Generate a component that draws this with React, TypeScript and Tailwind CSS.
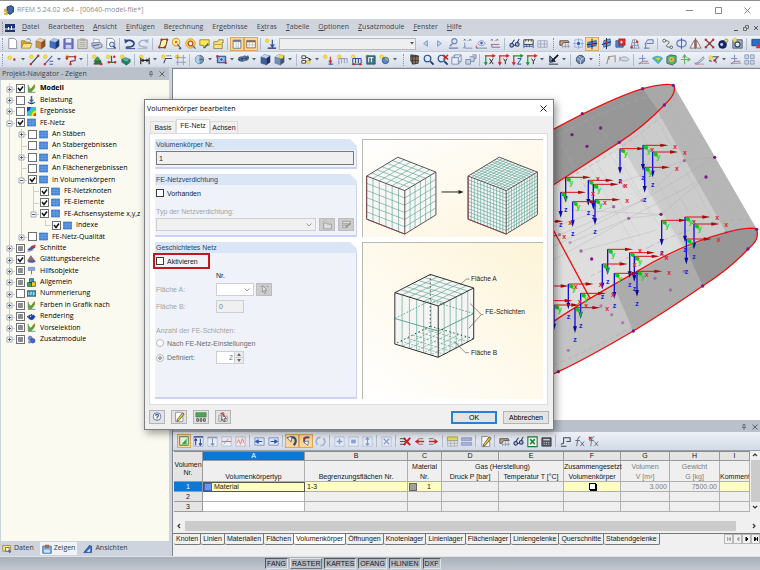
import React from "react";

type Shape = [string, string?, string?, number?];

const c = (x: number, y: number, r: number) =>
  `M${x - r} ${y}a${r} ${r} 0 1 0 ${2 * r} 0a${r} ${r} 0 1 0 ${-2 * r} 0`;

const spark = (x = 3.5, y = 4): Shape => [c(x, y, 2), "#f6e23c", "#d8b93a", 0.6];
const red = (x: number, y: number): Shape => [c(x, y, 1.3), "#dd2222"];
const page: Shape = ["M3 1.5h6l2.500 2.500v8.500h-8.500z", "#fff", "#7a8290", 0.9];
const lens: Shape[] = [
  [c(6, 6, 3.6), "#dceaf8", "#2c4f8c", 1.3],
  ["M9 9l3.500 3.500", "none", "#223e70", 2],
];
const cube = (a: string, b: string, d: string): Shape[] => [
  ["M2 4.500l4-3l6 1.500l-4 3z", a, "#4a5a7a", 0.4],
  ["M2 4.500l6 1.500v7l-6-2z", b, "#4a5a7a", 0.4],
  ["M8 6l4-3v7l-4 3z", d, "#4a5a7a", 0.4],
];
const axisIcon = (a: string, b: string): Shape[] => [
  ["M2 3h10M10 1.500l2.500 1.500l-2.500 1.500", "none", a, 1.3],
  ["M3 3v9M1.500 10l1.500 2.500l1.500-2.500", "none", b, 1.3],
];
const support: Shape[] = [
  ["M3 7c2-4 6-4 8 0c-2 3-6 3-8 0", "#dbe5f5", "#6d86bd", 0.8],
  [c(7, 6.500, 1.5), "#4d6fb8"],
  ["M1 12h12", "none", "#7d8aa8", 1],
];
const gridDim: Shape[] = [
  ["M2 11h10M2 11v-7h10v7M5 4v7M9 4v7M2 7.500h10", "none", "#8f9ab5", 0.8],
];

const ICONS: Record<string, Shape[]> = {
  neu: [page],
  oeffnen: [
    ["M1.500 4h4l1 1.500h5v6h-10z", "#d9a520", "#8a6a14", 0.6],
    ["M3.500 7h9.500l-2 5h-9.500z", "#ffe08a", "#8a6a14", 0.6],
    ["M7 3c2-2 4-1 4.500 1", "none", "#3d67ad", 1],
  ],
  block: cube("#f2d28a", "#d4923c", "#8a4f1c"),
  blockblau: cube("#a9c9f2", "#3c6fc4", "#1c3877"),
  speichern: [
    ["M2 2h10v10.500h-10z", "#6f78c4", "#3a4080", 0.7],
    ["M4 2h6v4h-6z", "#e9ecfa"],
    ["M4 8.500h6v4h-6z", "#c9cde8"],
  ],
  ablage: [
    ["M2 3h10v9.500h-10z", "#d6d3cc", "#8b857c", 0.8],
    ["M4.500 1.500h5v2.500h-5z", "#a7a7a7"],
    ["M4 6h6M4 8h6M4 10h6", "none", "#a09a90", 0.7],
  ],
  drucken: [
    ["M4 2l6 1v4h-6z", "#fff", "#7786a8", 0.6],
    ["M2 6.500l8-1l3 2.500v3l-7 2l-4-3z", "#bcc5d6", "#57637d", 0.7],
    ["M3 9.500l7-1.500", "none", "#3f5b98", 1],
  ],
  vorschau: [page, [c(8.500, 8, 2.6), "#cfe2f7", "#3d5f9c", 1], ["M10 10l2.500 2.500", "none", "#2b4677", 1.5]],
  undo: [["M2 4c3-1 9-1 10 3c0 3-4 4-9 4", "none", "#2c4687", 1.7], ["M1.500 2l.5 5l4-2.500z", "#2c4687"], ["M3 12.500h10", "none", "#2c4687", 1]],
  redo: [["M12 4c-3-1-9-1-10 3c0 3 4 4 9 4", "none", "#a5b2cc", 1.6], ["M12.500 2l-.5 5l-4-2.500z", "#a5b2cc"], ["M1 12.500h10", "none", "#a5b2cc", 1]],
  flaeche: [["M3.500 11.500l2.500-9h6.500l-2.500 9z", "#fff7a0", "#2f2f2f", 1], red(3.500, 11), red(12, 3), red(6, 3), red(9.500, 11)],
  lasso: [[c(6.500, 5.500, 4), "#fdf1a5", "#e0a43a", 1.2], [c(6.500, 5.500, 1.4), "#e86a2a"], ["M8 8l4 4.500M12 12.500h-2.500", "none", "#4a5775", 1.3]],
  zielring: [[c(7, 7, 5), "#f9e64a", "#c9a020", 1], [c(7, 7, 2.5), "#fff", "#c44a33", 1.5], ["M9 9l3.500 3.500", "none", "#5a6174", 1.3]],
  hinweis: [["M2 3h10v6h-4l-2 3v-3h-4z", "#fbe94f", "#7a7430", 0.8], ["M7 12l4-5", "none", "#3e5dac", 1.4]],
  ordner: [["M2 5h4l1-2h5v3h-1v6.500h-9z", "#fbe377", "#77713a", 0.8], ["M3 8h7", "none", "#a18b2a", 0.8]],
  navigator: [["M2.500 2.500h9v9.500h-9z", "#fff", "#66707f", 1], ["M2.500 3.500h9", "none", "#66707f", 2], ["M6 4v8M8.500 4v8", "none", "#98a2b3", 0.8]],
  tabelle: [["M2 3h10v8.500h-10z", "#fff", "#7b6a5a", 1], ["M2 4h10", "none", "#7b6a5a", 2], ["M2 8h10M5 4v8M8.500 4v8", "none", "#b5a89a", 0.7]],
  lastfall: [spark(), ["M9 3v7M7 8l2 3l2-3", "none", "#30549e", 1.3], ["M4 12h9", "none", "#26344f", 1.4]],
  links: [["M9 4l-4 3l4 3z", "#c4d5f4", "#6482c2", 0.8]],
  rechts: [["M5 4l4 3l-4 3z", "#c4d5f4", "#6482c2", 0.8]],
  lupe: [[c(8, 4.500, 2.800), "#dbe5f5", "#6d81b0", 1.2], ["M6 7l-3 3M2 12h10", "none", "#6d81b0", 1.3]],
  augex: [...support, ["M2 9l-1 2l2 1", "none", "#cc5555", 1]],
  xwert: [["M3 2l2 2M5 2l-2 2M7 4h1M9 2l2 2M11 2l-2 2", "none", "#555f75", 0.8], ["M4 6v6h8M2 12l3-2", "none", "#8390b4", 1]],
  xachse: [["M2 2l2 2M4 2l-2 2M6 4h1M8 2l2 2M10 2l-2 2", "none", "#555f75", 0.8], ["M2 8h9", "none", "#cc5555", 1], ["M3 8v3h9", "none", "#5d74b8", 1]],
  brille: [[c(4, 9, 2), "#9fb8e8", "#26355c", 1.1], [c(10, 8, 2), "#9fb8e8", "#26355c", 1.1], ["M4 7l3-4M10 6l2-4M6 9h2", "none", "#26355c", 1.1]],
  messen: [["M2 3h10v5h-10z", "#f0f0e8", "#333", 1], ["M2 8v4M5 8v3M8 8v3M12 8v4M2 10h10", "none", "#3560b8", 1], ["M4 3v2M7 3v2M10 3v2", "none", "#333", 0.8]],
  messengrau: gridDim,
  hand: [["M2 4h9l1 2h-6l-2 3h-2z", "#c7a183", "#3c3834", 0.8], ["M5 9v3M8 7v5M11 7v5M4 10h9", "none", "#8b8f99", 0.8]],
  raster: [["M7 1v12M1 7h12M3 3h8v8h-8z", "none", "#8aa2d8", 0.8], [c(7, 7, 1.8), "#2e5fc2"]],
  ebene: [["M2 5l10-2v6l-10 2z", "#4e8bdd", "#1c3b77", 0.7], ["M7 1v12M1 8l12-2", "none", "#1c2d55", 1.2], red(7, 7)],
  ebene2: [["M4 4l7-2v7l-7 2z", "#6fa0e4", "#1c3b77", 0.7], ["M7 1v12M2 8l10-3", "none", "#1c2d55", 1.1], red(7, 6)],
  ebene3: [["M2 4h8v7h-8z", "#4e8bdd", "#1c3b77", 0.7], ["M5 2h7v7h-7z", "#cc3030", "#822", 0.6], ["M8 4v3M6.500 5.500h3", "none", "#fff", 0.9]],
  gitter: [["M3 12l2-9h4l3 9zM4 9h7M4.500 6h6M7 3v9", "none", "#7e8aa6", 0.9], red(4, 11), red(10, 5)],
  beschriftung: [["M3 8l3-5h6v4h-7", "#dae3f4", "#5f71a0", 1], ["M2 12h6M4 12v-5", "none", "#5f71a0", 1]],
  verbinden: [[c(3.500, 4, 1.6), "#fff", "#444", 0.9], [c(11, 11, 1.4), "#fff", "#444", 0.9], ["M5 4c4 0 5 2 2 4s0 3 2.500 3", "none", "#555", 1]],
  ellipse: [["M2 7c0-5 10-5 10 0s-10 5-10 0", "none", "#6a82c9", 1.4], ["M7 1v12", "none", "#c33", 1]],
  spiegeln: [["M6 3v9h-5zM8 3v9h5z", "#f0f0f0", "#8a6060", 0.9], ["M7 1v12", "none", "#b33", 0.9]],
  kreuz: [["M3 3l8 8M11 3l-8 8", "none", "#555", 1.4], red(3, 3), red(11, 3), red(3, 11), red(11, 11), red(7, 7)],
  kugel: [[c(6, 8, 4.2), "#182a6a", "#0c1440", 0.8], [c(5, 8, 1.6), "#cfd8ff"], [c(10, 4, 1.8), "#f0e66a", "#555", 0.6]],
  kamera: [["M2 3h10v9h-10z", "#aab4c8", "#3c4966", 0.9], [c(7, 8, 2.8), "#dfe9fb", "#26344f", 1.2], spark(4, 3)],
  monitor: [["M2 2.500h11v7h-11z", "#2c6fc4", "#173a70", 0.8], ["M6 12l3-5l3 5z", "#dd3333"]],
  punkt: [spark(4, 5), red(9, 7)],
  stab: [spark(), ["M3 12l8-9", "none", "#3a3a3a", 1.2], red(3, 12), red(11, 3)],
  stab2: [spark(), ["M3 12l8-9M8 9h4M8 12h4", "none", "#4b5ea0", 1.1], red(3, 12)],
  linie: [spark(), ["M3 6v-2h9v4l-5 1v4", "none", "#8a3030", 1.2], red(3, 6), red(12, 4), red(7, 12)],
  auflager: [spark(), ["M7 4l4 5h-8z", "#3f9a4f", "#1b5a29", 0.6], ["M3 12h9l-2-3h-5z", "#2e7d3c", "#133f1b", 0.6], red(11, 12)],
  gelenk: [spark(), ["M4 10h7M7 3v7", "none", "#2c6e38", 1.3], red(4, 10), red(11, 10), red(10, 4)],
  volumen: [spark(), ["M3 7l4-2l5 2l-4 3z", "#58b8a4", "#1e5a7a", 0.7], ["M3 7v3l5 3v-3zM8 10v3l4-3v-3z", "#2b8b5c", "#1e5a4a", 0.6]],
  mass: [spark(), ["M3 5v7M12 5v7M3 8h9", "none", "#222", 1.2], ["M6 6l-3 2l3 2zM9 6l3 2l-3 2z", "#222"]],
  text: [spark(), ["M4 11l2-5h7M7 3h1M9 3h1M11 3h1", "none", "#3c4a70", 1.1]],
  rahmen: [spark(), ["M4 2v11M10 2v11M2 5h11M2 10h11", "none", "#8a93a8", 0.9]],
  kreis: [[c(7, 7, 4.500), "#7d96c4", "#40547f", 0.8], ["M7 2.500a4.500 4.500 0 0 0 0 9z", "#b9cae8"], ["M7 7h4", "none", "#c33", 1.3]],
  quadrat: [["M2.500 3.500h9v7h-9z", "#7aa4de", "#2b4676", 1], [c(7, 7, 2), "#2b60b8", "#fff", 0.7], red(2.500, 3.500), red(11.500, 10.500)],
  balken: [["M2 8v-3l3-1v5zM6 9v-5l3-1v5zM10 8v-4l2-1v4z", "#6c93cf", "#23395f", 0.8], ["M1 7l12-2", "none", "#25304d", 0.9]],
  koerper: cube("#bcd3f5", "#3d5f9f", "#1d2f59"),
  koerperneu: [...cube("#cfe0f4", "#6f93b8", "#3c5777"), spark(9, 4)],
  fluss: [["M2 3h4v3h-4zM2 8h4v3h-4z", "#fff", "#333", 0.9], ["M6 4.500c3 0 3 2 5 2.500M6 9.500c3 0 3-2 5-2.500M9 5.500l3 1.500l-3 1.500", "none", "#333", 1], spark(9, 10)],
  last1: [spark(), ["M9 4v6M7.500 8l1.500 3l1.500-3", "none", "#c33", 1.2], ["M7 12h5", "none", "#2e58b0", 1.3]],
  last2: [spark(), ["M3 6h9M3 6v5M6 6v5M9 6v5M12 6v5M2 12l2-1", "none", "#8b95b8", 1]],
  last3: [spark(), ["M3 6h9M3 6v5M6 6v5M9 6v5M12 6v5M2 12h11", "none", "#2c4b97", 1.1], red(4, 12), red(11, 12)],
  last4: [spark(), ["M3 3h9v9h-9z", "#3f7b86", "#1d3f58", 0.8], ["M5 5h5M5 5v5M8 5v5", "none", "#fff", 1]],
  last5: [spark(4, 4), [c(8, 8, 3.500), "#5b87c9", "#254a84", 0.8], ["M8 5l3 3", "none", "#d4b428", 1.5]],
  greifen: [["M3 2l8 1v8l-6 1l-2-4z", "#8d7261", "#333", 0.9], ["M3 4h9M5 2v10M8 2v10M3 8h9", "none", "#333", 0.8]],
  zoom: lens,
  zoomx: [...lens, ["M8 2l5 5M13 2l-5 5", "none", "#d42020", 1.5]],
  drahtwuerfel: [["M2 5h7v7h-7zM5 2h7v7h-3M2 5l3-3M9 5l3-3M9 12l3-3M5 2v3", "#e8eef9", "#7382a8", 0.9]],
  wuerfelgruppe: [["M2 7h5v5h-5zM6 4h5v5h-4M9 2h4v4h-2", "#c9d3e6", "#7382a8", 0.9]],
  achsex: [...axisIcon("#d22", "#1a9a2a"), ["M7 6l4 6M11 6l-4 6", "none", "#222", 1]],
  achsey: [...axisIcon("#d22", "#d22"), ["M7 6l2 3l2-3M9 9v3", "none", "#222", 1]],
  achsez: [...axisIcon("#1a9a2a", "#d22"), ["M7 6h4l-4 6h4", "none", "#2440b0", 1]],
  achsey2: [...axisIcon("#d22", "#1a9a2a"), ["M7 6l2 3l2-3M9 9v3", "none", "#222", 1]],
  zeichnen: [["M2 12h10M3 3l6 6l-6 1z", "#7e91ba", "#1d2640", 1], ["M5 9l7-7", "none", "#111", 1.8]],
  netzkugel: [[c(7, 7, 4.500), "#6d86b0", "#33435f", 0.9], ["M3 6l4 2l4-3M7 8v4M5 3l4 4", "none", "#c8d5ec", 0.9]],
  verlauf: [["M3 12l2-8l7-1v7", "none", "#a7888d", 1.2], ["M5 4l1 3", "none", "#4f9b5a", 1]],
  fisch: [["M2 6c4-3 8-2 10 1c-2 2-5 2-8 1zM2 4v5", "#d7dbe4", "#8d94a3", 0.9]],
  ergx: [["M6 2v7l-4 3M6 9h6M2 6h7", "none", "#7f8fc0", 1.1], ["M2 11h11", "none", "#c66", 0.9]],
  regenbogen: [["M1 6c3-4 9-4 12 0l-5 6z", "#4fa9e6"], ["M3 6c3-2 6-2 8 0l-3 4z", "#58c84c"], ["M5 5.500c1-1 4-1 5 0l-2 2.500z", "#f1cf30"]],
  ergwuerfel: [["M2 4l4-2l6 1v7l-4 3l-6-2z", "#54b36d", "#38507a", 0.8], [c(7, 7, 2.500), "#f2d43c"], [c(7, 7, 1.2), "#e64c2c"]],
  ergpfeile: [["M6 12v-9M4 5l2-3l2 3M2 7h9M9 5l3 2l-3 2", "none", "#6bb06e", 1.2]],
  ergpfad: [["M2 11c4 0 6-4 9-7l1 2c-3 3-6 5-8 6z", "#dbe3f6", "#6f7fae", 0.9], ["M2 12h10", "none", "#c77", 0.8]],
  erglicht: [spark(4, 5), ["M6 4h6l-3 3l1 4M2 8l3 1", "none", "#555", 1.2], red(8, 8)],
  kacheln: [["M2 2h4v4h-4zM8 2h4v4h-4zM2 8h4v4h-4zM8 8h4v4h-4z", "#cdd7ea", "#7f8dac", 0.8]],
  t1: [["M2 2h10v10h-10z", "#e9f4e2", "#2e7d3c", 1], ["M4 11l6-7v7z", "#3fa24d"]],
  t2: [["M2 2h10v10h-10z", "#eef2f8", "#8692ad", 0.7], ["M4 11v-7M2.500 6l1.500-2l1.500 2M9 4v7M7.500 9l1.500 2l1.500-2M2 2h10", "none", "#2b4c9c", 1.2]],
  t3: [["M2 2h10v10h-10z", "#eef2f8", "#a5afc4", 0.7], ["M7 4v7M5 9l2 2l2-2M2 3h10", "none", "#7f93c2", 1.2]],
  t4: [["M2 2h10v10h-10z", "#eef2f8", "#a5afc4", 0.7], ["M2 7h10", "none", "#c77", 1.2], ["M4 10l5-6", "none", "#8ea0cc", 1]],
  t5: [["M2 2h10v10h-10z", "#f3ecef", "#b5a5b4", 0.7], ["M3 9l2-4l2 5l2-6l2 5", "none", "#c88", 1]],
  t6: [["M2 3h10v8h-10z", "#dfe8f8", "#6f82b0", 0.8], ["M10 7h-6M6 5l-3 2l3 2", "#2c55b5", "#2c55b5", 1.3]],
  t7: [["M2 3h10v8h-10z", "#dfe8f8", "#6f82b0", 0.8], ["M4 7h6M8 5l3 2l-3 2", "#2c55b5", "#2c55b5", 1.3]],
  t8: [["M5 3c7-2 8 5 4 9", "none", "#2f4a8c", 2.4], ["M1 3l5 5l1-6z", "#fff", "#26355c", 0.8]],
  t9: [["M11 3c-7-2-7 4-5 6", "none", "#3c4f86", 2.2], ["M4 8l5 4l1-5z", "#fff", "#3c4f86", 0.8], red(5, 4)],
  t10: [["M7 2.500a4.500 4.500 0 0 0-3 8M7 11.500a4.500 4.500 0 0 0 3-8", "none", "#a8b6d2", 1.8]],
  t11: [["M2 2h10v10h-10z", "#e6edf9", "#a9b5cf", 0.7], ["M7 4v6M4 7h6", "none", "#7d97d0", 1.5]],
  t12: [["M2 2h10v10h-10z", "#e6edf9", "#a9b5cf", 0.7], ["M4.500 5h5v4h-5z", "#8aa1d4"]],
  t13: [["M2 2h10v10h-10z", "#e6edf9", "#a9b5cf", 0.7], ["M7 3v8M5 5l2-2l2 2M5 9l2 2l2-2", "none", "#7d97d0", 1.2]],
  t14: [["M2 2h10v10h-10z", "#e6edf9", "#a9b5cf", 0.7], ["M4 4l6 6M10 4l-6 6", "none", "#8fa0c8", 1.3]],
  t15: [["M1 4h6M1 7h6M1 10h6", "none", "#444", 1], ["M5 3l7 8M12 3l-7 8", "none", "#c81e1e", 2]],
  t16: [["M6 4h5M6 10h5", "none", "#777", 1], ["M12 7h-8", "none", "#c82828", 1.6], ["M6 4l-4 3l4 3z", "#c82828"]],
  t17: [["M2 4h5M2 10h5", "none", "#777", 1], ["M2 7h8", "none", "#c82828", 1.6], ["M8 4l4 3l-4 3z", "#c82828"]],
  t18: [["M1.500 2h11v4h-11z", "#e4dc50", "#8f8a3a", 0.7], ["M1.500 6h11v6h-11zM5 6v6M9 6v6M1.500 9h11", "none", "#a0a0a0", 0.7]],
  t19: [["M1.500 3h11v3h-11zM1.500 8h11v3h-11z", "#aab4e0", "#7d88b8", 0.7]],
  stift: [page, ["M5 10l6-8l2 1.500l-6 7.500l-2.500 1z", "#f3d32c", "#333", 0.8]],
  excel: [["M2 2h10v10.500h-10z", "#fff", "#1f7a33", 1.2], ["M4.500 4.500l5 5.500M9.500 4.500l-5 5.500", "none", "#1f8a38", 1.8]],
  rechner: [["M2 3h10v9h-10z", "#555a66", "#2a2d35", 0.8], ["M3.500 5h7", "none", "#cfd8c4", 1.5], ["M4 8h1M6.500 8h1M9 8h1M4 10h1M6.500 10h1M9 10h1", "none", "#ddd", 1]],
  formel: [["M5 9v-6h7v4h-4M2 12h6M5 9l-3 1", "none", "#3c465c", 1.1]],
  fx: [["M8 2c-3-1-3 4-4 10M2.500 6h5M8 7l4 5M12 7l-4 5", "none", "#5c6474", 1]],
  fxrot: [["M8 2c-3-1-3 4-4 10M2.500 6h5M8 7l4 5M12 7l-4 5", "none", "#5c6474", 0.9], ["M2 2l3 3M5 2l-3 3", "none", "#c22", 1.3]],
  hilfe: [[c(7, 6.500, 4.500), "#f4f8ff", "#53668f", 0.9], ["M5.500 5.500c0-2.500 3.500-2 3 0c0 1.200-1.500 1-1.500 2.500M7 9v1", "none", "#2b4fa0", 1.4]],
  einheiten: [["M1 2h12v5h-12z", "#4fa657", "#2a6a32", 0.6], ["M2 9h2v3h-2zM6 9h2v3h-2zM10 9h2v3h-2z", "none", "#333", 0.9]],
  auswahl: [["M2 5h4v7h-4zM8 6h4v6h-4z", "#d8d8d8", "#8a8a8a", 0.7], ["M6 3l5 6h-3l1.500 3l-1.500 .500l-1.500-3l-1 1.500z", "#fff", "#333", 0.8], ["M4 3l4-1M8 3v4", "none", "#d22", 1.3]],
  auswahlgrau: [["M5 2l5 6h-3l1.500 3.500l-1.500 .500l-1.500-3.500l-1.500 1.500z", "#e8e8e8", "#7f7f7f", 0.9], ["M2 3h2M9 3h3", "none", "#999", 1]],
  ordnergrau: [["M2 5h4l1 1.500h5v6h-10z", "#dcdcdc", "#909090", 0.9], [c(4, 3, 1.500), "#eee", "#999", 0.7]],
  editgrau: [["M2 3h10v3h-10zM2 8h6v3h-6z", "#dadada", "#909090", 0.9], ["M6 10l6-4", "none", "#888", 1.5]],
  modell: [["M2 1v12h11", "none", "#555", 1], ["M2 4l4 4l6-6v4l-5 6h-4z", "#45b02c", "#2c7a1a", 0.5], ["M6 9l6-8", "none", "#b36b2a", 1.6], ["M1 2l4 6", "none", "#6fcf4a", 1.4]],
  belastung: [["M7 0v8", "none", "#3c5fa8", 2.4], ["M3 6l4 4l4-4z", "#3c5fa8"], ["M1 9c1 5 11 5 12 0l-3 1h-6z", "#24407c"]],
  ergebnisse: [["M0 0h14v14h-14z", "#2ec4e6"], ["M0 0h6c-1 4-2 6-6 7z", "#2036c8"], ["M14 3c-6 1-9 4-10 11h10z", "#5ed23a"], ["M14 6c-5 1-6 3-7 8h7z", "#f7e22c"], ["M14 9c-3 1-4 2-4 5h4z", "#ee3b24"]],
  netz: [["M0.500 1.500h13v11h-13z", "#3f83d6", "#2760ad", 0.8], ["M0.500 5h13M0.500 9h13M5 1.500v11M9.500 1.500v11", "none", "#8bb8ee", 0.7]],
  schnitte: [["M1 9l7-6l5 2l-8 5z", "#3a5fc0", "#1c2f70", 0.7], ["M7 5l6-3", "none", "#d22", 2.4], ["M1 12l9-3", "none", "#888", 1.5]],
  glaettung: [["M1 9l5-8l3 4l4 5z", "#8b7b9c", "#3e3a60", 0.8], ["M1 10c3 3 9 3 12 0l-5-3z", "#4c5a96"], [c(7, 7, 2.200), "#c94a58"]],
  hilfsobjekte: [["M2 2h10v5h-10z", "#8fa5dd", "#5e76b5", 0.8], ["M7 7v6", "none", "#5e76b5", 1.5]],
  allgemein: [["M4 1h6v6h-6z", "#3aa6e0", "#222", 1], ["M1 7h6v6h-6z", "#3fae38", "#222", 1], ["M7 6h6v7h-6z", "#f2d830", "#222", 1]],
  nummern: [["M0 2.500h14v9h-14z", "#2c8ab0", "#174b66", 0.8], ["M2.500 5v4M5 5h2v2h-2v2h2M9 5h2v4h-2M9 7h2", "none", "#fff", 1]],
  teekanne: [["M3 5h8c2 4-1 7-4 7s-6-3-4-7z", "#1f3fb0", "#12246b", 0.7], ["M0 6l3 4M11 7h2", "none", "#1f3fb0", 1.5], [c(7, 4, 1), "#12246b"], [c(5.500, 7, 1), "#cdd8ff"]],
  zusatz: [[c(5, 5, 3.200), "#6f8fd6", "#2b4796", 0.8], [c(9, 9, 3.500), "#456ac4", "#233c85", 0.8], [c(4, 11, 1.800), "#8fa8de", "#2b4796", 0.7]],
  daten: [["M1 2h11v8h-11z", "#f6e27a", "#8a7420", 0.9], ["M5 5h5v5h-5z", "#fff", "#333", 0.9], ["M9 8l4 3l-3 2z", "#2c62c0"]],
  zeigen: [["M1 3h12v10h-12z", "#7fb0e8", "#2c5ca8", 1], ["M4 1h6v5h-6z", "#9c6e50"], ["M3 8h8v4h-8z", "#cfe2f8"]],
  ansichten: [["M1 12l8-10l3 1v9z", "#3b68c4", "#1d3c84", 0.9], ["M5 11l5-5v5z", "#dfe9fb"]],
};

function Icon({ name, className = "size-[13px]" }: { name: string; className?: string }) {
  return (
    <svg viewBox="0 0 14 14" className={`shrink-0 ${className}`} aria-hidden="true">
      {ICONS[name].map(([d, fill, stroke, w], i) => (
        <path key={i} d={d} fill={fill ?? "none"} stroke={stroke ?? "none"} strokeWidth={w ?? 1} />
      ))}
    </svg>
  );
}

function Tools({ items }: { items: string }) {
  return (
    <>
      {items.split(" ").map((t, i) => {
        if (t === "|") return <span key={i} className="flex w-[5px] shrink-0 justify-center"><span className="h-3 w-px bg-[#b4bbc8]" /></span>;
        if (t === ":") return <span key={i} className="flex w-2 shrink-0 justify-center"><span className="h-3 border-l border-dotted border-[#8a93a5]" /></span>;
        if (t === ">")
          return (
            <button key={i} aria-label="Mehr" className="flex w-2 shrink-0 items-center justify-center">
              <svg viewBox="0 0 4 3" className="h-[3px] w-1"><path d="M0 0h4l-2 2.500z" fill="#5a6272" /></svg>
            </button>
          );
        const on = t.startsWith("*");
        const name = on ? t.slice(1) : t;
        return (
          <button
            key={i}
            aria-label={name}
            className={`flex h-[14px] w-[14px] shrink-0 items-center justify-center ${on ? "border border-[#dfa75a] bg-[#fcd798]" : ""}`}
          >
            <Icon name={name} className={on ? "size-3" : "size-[13px]"} />
          </button>
        );
      })}
    </>
  );
}

const MENUS: [string, string, string][] = [
  ["", "D", "atei"], ["Bearbeite", "n", ""], ["", "A", "nsicht"], ["", "E", "infügen"], ["Be", "r", "echnung"], ["Er", "g", "ebnisse"],
  ["E", "x", "tras"], ["", "T", "abelle"], ["", "O", "ptionen"], ["", "Z", "usatzmodule"], ["", "F", "enster"], ["", "H", "ilfe"],
];

type Node = { t: string; l: number; s: 0 | 1 | 2; i: string; e?: "+" | "-"; bold?: boolean; last?: boolean };
const TREE: Node[] = [
  { t: "Modell", l: 0, s: 1, i: "modell", e: "+", bold: true },
  { t: "Belastung", l: 0, s: 0, i: "belastung", e: "+" },
  { t: "Ergebnisse", l: 0, s: 0, i: "ergebnisse", e: "+" },
  { t: "FE-Netz", l: 0, s: 1, i: "netz", e: "-" },
  { t: "An Stäben", l: 1, s: 0, i: "netz", e: "+" },
  { t: "An Stabergebnissen", l: 1, s: 0, i: "netz" },
  { t: "An Flächen", l: 1, s: 0, i: "netz", e: "+" },
  { t: "An Flächenergebnissen", l: 1, s: 0, i: "netz" },
  { t: "In Volumenkörpern", l: 1, s: 1, i: "netz", e: "-" },
  { t: "FE-Netzknoten", l: 2, s: 1, i: "netz" },
  { t: "FE-Elemente", l: 2, s: 1, i: "netz" },
  { t: "FE-Achsensysteme x,y,z", l: 2, s: 1, i: "netz", e: "-", last: true },
  { t: "Indexe", l: 3, s: 1, i: "netz", last: true },
  { t: "FE-Netz-Qualität", l: 1, s: 0, i: "netz", e: "+", last: true },
  { t: "Schnitte", l: 0, s: 2, i: "schnitte", e: "+" },
  { t: "Glättungsbereiche", l: 0, s: 1, i: "glaettung", e: "+" },
  { t: "Hilfsobjekte", l: 0, s: 2, i: "hilfsobjekte", e: "+" },
  { t: "Allgemein", l: 0, s: 2, i: "allgemein", e: "+" },
  { t: "Nummerierung", l: 0, s: 0, i: "nummern", e: "+" },
  { t: "Farben in Grafik nach", l: 0, s: 2, i: "modell", e: "+" },
  { t: "Rendering", l: 0, s: 2, i: "teekanne", e: "+" },
  { t: "Vorselektion", l: 0, s: 2, i: "modell", e: "+" },
  { t: "Zusatzmodule", l: 0, s: 2, i: "zusatz", e: "+", last: true },
];

function Tick({ state }: { state: 0 | 1 | 2 }) {
  return (
    <span className="relative flex size-[9px] shrink-0">
      <input type="checkbox" defaultChecked={state === 1} className="size-[9px] appearance-none border border-[#6d7076] bg-white" />
      <svg viewBox="0 0 9 9" className="pointer-events-none absolute inset-0 size-[9px]">
        {state === 1 && <path d="M2 4l2 2.500l3-4" fill="none" stroke="#111" strokeWidth="1.500" />}
        {state === 2 && <path d="M2 2h5v5h-5z" fill="#8e8e8e" />}
      </svg>
    </span>
  );
}

function TreeRow({ n }: { n: Node }) {
  return (
    <label className="flex min-h-0 items-center overflow-hidden pl-[2px]">
      {Array.from({ length: n.l }, (_, k) => (
        <svg key={k} viewBox="0 0 12 12" className="size-3 shrink-0">
          {!(k === 2 && n.l === 3) && <path d="M6.500 0v12" stroke="#d0cec7" />}
        </svg>
      ))}
      <svg viewBox="0 0 12 12" className="size-3 shrink-0">
        <path d={`M6.500 0v${n.last ? 6 : 12}M6 6.500h6`} stroke="#d0cec7" fill="none" />
        {n.e && <path d="M4 4h5v5h-5z" fill="#fff" stroke="#a6a9b0" />}
        {n.e && <path d={n.e === "+" ? "M5 6.500h3M6.500 5v3" : "M5 6.500h3"} stroke="#4a5f94" />}
      </svg>
      <span className="ml-px flex"><Tick state={n.s} /></span>
      <Icon name={n.i} className="ml-[2px] size-[9px]" />
      <span className={`ml-1 whitespace-nowrap ${n.bold ? "font-bold" : ""}`}>{n.t}</span>
    </label>
  );
}

function Navigator() {
  return (
    <aside className="flex w-[169px] shrink-0 flex-col bg-[#cdd4de] font-['Open_Sans','Noto_Sans',sans-serif] text-[7px] text-black">
      <header className="flex h-3 items-center bg-[#bac1cb] pr-1 pl-[2px] text-[#3a414c]">
        <h2 className="flex-1">Projekt-Navigator - Zeigen</h2>
        <PinClose />
      </header>
      <div className="ml-px flex-1 bg-[#fbfaf1] pt-[3px]">
        <div className="grid h-[262px] auto-rows-fr">
          {TREE.map((n) => <TreeRow key={n.t} n={n} />)}
        </div>
      </div>
      <nav className="flex h-[15px] items-center gap-[6px] pl-[2px] text-[#303a4a]">
        <button className="flex items-center gap-[2px]"><Icon name="daten" className="size-[10px]" />Daten</button>
        <button className="flex h-[13px] items-center gap-[2px] bg-[#eff2f7] px-[2px]"><Icon name="zeigen" className="size-[10px]" />Zeigen</button>
        <button className="flex items-center gap-[2px]"><Icon name="ansichten" className="size-[10px]" />Ansichten</button>
      </nav>
    </aside>
  );
}

function PinClose() {
  return (
    <span className="flex gap-[5px]">
      <button aria-label="Anheften"><svg viewBox="0 0 6 6" className="size-[6px]"><path d="M1 3.500h4M2 3v-2.500h2v2.500M3 4v2" fill="none" stroke="#5b6370" strokeWidth="0.800" /></svg></button>
      <button aria-label="Schließen"><svg viewBox="0 0 6 6" className="size-[6px]"><path d="M0.500 0.500l5 5M5.500 0.500l-5 5" stroke="#5b6370" /></svg></button>
    </span>
  );
}

const AXES: [number, number][] = [
  [210, 236], [279, 226], [308, 246], [284, 292], [47, 322], [115, 331], [130, 343], [68, 395], [135, 389], [32, 367],
  [335, 451], [405, 441], [432, 462], [409, 507], [173, 538], [239, 548], [253, 559], [157, 582], [193, 610], [261, 604],
  [55, 642], [92, 670], [75, 713], [-20, 648], [-36, 454], [-8, 692], [12, 705], [-54, 497],
];
const DOTS: [number, number, number][] = [
  [370, 46, 1], [278, 56, 1], [343, 105, 1], [97, 131, 1], [208, 217, 1], [152, 174, 1], [66, 194, 1], [111, 229, 1], [494, 262, 1], [468, 321, 1],
  [403, 272, 0.500], [333, 433, 1], [236, 445, 0.600], [191, 410, 0.600], [277, 391, 0.300], [125, 567, 1], [93, 543, 0.600], [60, 518, 0.300], [28, 494, 0.500],
  [620, 478, 1], [594, 537, 1], [458, 648, 1], [250, 783, 1], [25, 905, 1], [315, 625, 0.400], [361, 660, 0.400], [403, 604, 0.400], [528, 487, 0.300],
  [347, 562, 0.300], [218, 758, 0.400], [185, 734, 0.400], [153, 708, 0.400], [55, 841, 0.400], [222, 348, 0.500],
];

function ModelView() {
  return (
    <svg viewBox="0 0 630 1050" className="h-[350px] w-[210px]" role="img" aria-label="Modell">
      <path d="M10 345L208 217L343 105L370 46L620 478L530 487L260 605L10 755z" fill="#dedede" />
      <path d="M208 217L343 105L370 46L620 478L530 487L405 540z" fill="#cbcbcb" />
      <path d="M325 128L343 105L370 46L620 478L528 487z" fill="#b6b6b6" />
      <path d="M10 178C90 135 200 80 278 56C330 42 366 40 372 48C378 66 366 84 343 105C300 150 250 190 208 217L10 345z" fill="#979797" />
      <path d="M278 56C330 42 366 40 372 48C378 66 366 84 325 122z" fill="#a8a8a8" />
      <path d="M10 755C90 700 180 650 260 605C350 550 440 510 530 487C580 474 616 472 620 478C626 500 620 515 594 537C560 575 510 615 458 648C390 695 310 747 250 783C170 830 90 875 25 905L10 912z" fill="#c3c3c3" />
      <path d="M190 645C300 583 440 510 530 487C580 474 616 472 620 478C626 500 620 515 594 537C560 575 510 615 458 648C390 695 310 747 250 783z" fill="#acacac" />
      <path d="M408 536C450 515 500 495 530 487C580 474 616 472 620 478C626 500 620 515 594 537C560 575 510 615 458 648z" fill="#979797" />
      <g fill="none" stroke="#a9a9a9" strokeWidth="2">
        <path d="M66 194L250 520M111 229L270 500M152 174L330 470M97 131L300 430M235 190L420 510M260 170L460 500M310 130L500 470M350 90L560 470M208 217L400 540" opacity="0.300" />
        <path d="M10 530L280 390L494 262L403 272L200 340M10 570L236 445L468 321L333 433L60 420M30 494L277 391L403 272M60 518L236 445L333 433M10 470L191 410M93 543L320 480" opacity="0.500" />
        <path d="M20 198C120 140 250 90 340 66C390 60 385 90 340 135C250 215 120 290 20 345M22 200L140 410M10 885C150 830 330 730 460 640M300 530C400 480 520 440 600 450M300 530L120 620" strokeDasharray="14 9" opacity="0.800" />
      </g>
      <g fill="none" stroke="#f01010" strokeWidth="4">
        <path d="M10 178C90 135 200 80 278 56C330 42 366 40 372 48C378 66 366 84 343 105C300 150 250 190 208 217L10 345" />
        <path d="M10 755C90 700 180 650 260 605C350 550 440 510 530 487C580 474 616 472 620 478C626 500 620 515 594 537C560 575 510 615 458 648C390 695 310 747 250 783C170 830 90 875 25 905L10 912" />
        <path d="M10 480L120 685" />
      </g>
      {DOTS.map(([x, y, o], i) => <circle key={i} cx={x} cy={y} r="5" fill="#7a1a86" opacity={o} />)}
      {AXES.map(([x, y], i) => (
        <g key={i} transform={`translate(${x} ${y})`} fontFamily="Liberation Sans, Arial, sans-serif" fontSize="21" fontWeight="bold">
          <path d="M0 0H58" stroke="#dc1010" strokeWidth="3" />
          <path d="M52 -5L76 0L52 5z" fill="#a80808" />
          <path d="M0 0V58" stroke="#1010e0" strokeWidth="4" />
          <path d="M-6 56H6L0 76z" fill="#0808a0" />
          <path d="M2 2l8-2l6 6l-3 8l-9-3z" fill="#18c018" />
          {x > 10 && <text x="11" y="22" fill="#18d818">y</text>}
          {x > -60 && <text x="91" y="10" fill="#e82020">x</text>}
          {x > 20 && <text x="-5" y="104" fill="#2020f0">z</text>}
        </g>
      ))}
    </svg>
  );
}

type P = [number, number];
const mix = (a: P, b: P, t: number): string => `${Math.round(a[0] + (b[0] - a[0]) * t)} ${Math.round(a[1] + (b[1] - a[1]) * t)}`;
function mesh(a: P, b: P, d: P, e: P, n: number): string {
  let s = "";
  for (let i = 1; i < n; i++) {
    s += `M${mix(a, b, i / n)}L${mix(d, e, i / n)}M${mix(a, d, i / n)}L${mix(b, e, i / n)}`;
  }
  return s;
}

function MeshCube({ dx, n }: { dx: number; n: number }) {
  const T: P = [125 + dx, 183], L: P = [31 + dx, 240], R: P = [240 + dx, 228], F: P = [146 + dx, 284];
  const LB: P = [31 + dx, 370], RB: P = [240 + dx, 357], FB: P = [146 + dx, 415];
  return (
    <g fill="none">
      <path d={`M${T}L${R}L${RB}L${FB}L${LB}L${L}z`} fill="#f7f8f6" />
      <path d={mesh(T, R, L, F, n) + mesh(L, F, LB, FB, n) + mesh(F, R, FB, RB, n)} stroke="#5fa597" strokeWidth="2" />
      <path d={`M${T}L${R}L${RB}L${FB}L${LB}L${L}zM${L}L${F}L${R}M${F}L${FB}`} stroke="#5a5254" strokeWidth="3" />
      <path d={`M${L}L${LB}L${FB}`} stroke="#8a4a50" strokeWidth="3" />
    </g>
  );
}

function RefineFigure() {
  return (
    <svg viewBox="20 133 543 289" className="h-full w-full" role="img" aria-label="Netzverdichtung">
      <MeshCube dx={0} n={6} />
      <MeshCube dx={306} n={12} />
      <path d="M257 288h56" stroke="#222" strokeWidth="3" />
      <path d="M308 282l16 6l-16 6z" fill="#222" />
    </svg>
  );
}

function LayerFigure() {
  const T: P = [223, 101], L: P = [116, 156], R: P = [354, 142], F: P = [247, 196];
  const TB: P = [223, 257], LB: P = [116, 311], RB: P = [354, 295], FB: P = [247, 351];
  let cols = "";
  for (let i = 1; i < 6; i++) cols += `M${mix(L, F, i / 6)}L${mix(LB, FB, i / 6)}M${mix(F, R, i / 6)}L${mix(FB, RB, i / 6)}`;
  return (
    <svg viewBox="20 8 543 467" className="h-full w-full" role="img" aria-label="Geschichtetes Netz">
      <path d="M223 101L354 142V295L247 351L116 311V156z" fill="#f5f5f3" />
      <g fill="none" stroke="#5fa597" strokeWidth="2">
        <path d={mesh(T, R, L, F, 6) + cols} />
        <path d={mesh(TB, RB, LB, FB, 6)} strokeDasharray="7 4" />
        <path d="M116 234L247 272L354 219" strokeWidth="3" />
        <path d="M116 234L223 180L354 219" strokeDasharray="5 5" strokeWidth="3" />
      </g>
      <g fill="none" stroke="#2e2e2e" strokeWidth="3">
        <path d="M223 101L354 142V295L247 351L116 311V156zM116 156L247 196L354 142M247 196V351" />
        <path d="M223 101V257L116 311M223 257L354 295" strokeDasharray="4 8" />
      </g>
      <path d="M312 133l20-18h9M343 189l34 33l-38 42M377 222h6M295 303l34 34h10" fill="none" stroke="#555" strokeWidth="2" />
      <g fontFamily="Liberation Sans, Arial, sans-serif" fontSize="20" fill="#222">
        <text x="346" y="122">Fläche A</text>
        <text x="389" y="219">FE-Schichten</text>
        <text x="346" y="343">Fläche B</text>
      </g>
    </svg>
  );
}

function Chevron() {
  return <svg viewBox="0 0 6 4" className="pointer-events-none absolute top-[5px] right-1 h-1 w-[6px]"><path d="M0.500 0.500l2.500 2.500l2.500-2.500" fill="none" stroke="#9a9a9a" /></svg>;
}

function Group({ title, className, children }: { title: string; className: string; children: React.ReactNode }) {
  return (
    <section className={`flex flex-col ${className}`}>
      <h3 className="h-[11px] bg-[#dae6f5] pl-px leading-[11px] text-[#1d4673] [clip-path:polygon(0_0,calc(100%-7px)_0,100%_7px,100%_100%,0_100%)]">{title}</h3>
      <div className="flex-1 border-r border-b-2 border-[#ccd2f6] bg-[#eff3f9] pr-[2px] pl-px">{children}</div>
    </section>
  );
}

const box = "size-2 shrink-0 appearance-none border border-[#3c3c3c] bg-white";
const greyBtn = "flex h-[13px] w-4 shrink-0 items-center justify-center border border-[#bdbdbd] bg-[#cccccc]";

function Dialog() {
  return (
    <div
      role="dialog"
      aria-label="Volumenkörper bearbeiten"
      className="absolute top-[99px] left-[144px] w-[410px] border border-[#7d7f83] bg-[#f0f0f0] font-['Liberation_Sans',Arial,sans-serif] text-[7px] leading-[9px] text-[#1a1a1a] shadow-[2px_3px_8px_rgba(0,0,0,0.4)]"
    >
      <header className="flex h-4 items-center justify-between bg-white pr-[6px] pl-[2px]">
        <h2 className="font-['Open_Sans','Noto_Sans',sans-serif] text-[7px] text-black">Volumenkörper bearbeiten</h2>
        <button aria-label="Schließen"><svg viewBox="0 0 7 7" className="size-[7px]"><path d="M0.500 0.500l6 6M6.500 0.500l-6 6" stroke="#222" /></svg></button>
      </header>
      <div className="flex h-[17px] items-end pl-[5px]" role="tablist">
        <button role="tab" className="h-3 w-[26px] border border-b-0 border-[#dadada] bg-[#f0f0f0]">Basis</button>
        <button role="tab" aria-selected="true" className="h-[14px] w-[34px] border border-b-0 border-[#dadada] bg-white pb-[2px]">FE-Netz</button>
        <button role="tab" className="h-3 w-[28px] border border-b-0 border-[#dadada] bg-[#f0f0f0]">Achsen</button>
      </div>
      <div className="mr-[5px] ml-1 flex gap-[5px] border border-[#dcdcdc] bg-white p-[5px] pr-1">
        <div className="flex w-[202px] shrink-0 flex-col gap-[5px]">
          <Group title="Volumenkörper Nr." className="h-[30px]">
            <input aria-label="Volumenkörper Nr." readOnly value="1" className="mt-px block h-[14px] w-full border border-[#7a7a7a] bg-[#f0f0f0] px-[2px]" />
          </Group>
          <Group title="FE-Netzverdichtung" className="h-[63px]">
            <label className="flex h-4 items-center gap-[3px]"><input type="checkbox" className={box} />Vorhanden</label>
            <label htmlFor="verdichtung" className="mt-[5px] flex h-[11px] items-center text-[#a3a3a3]">Typ der Netzverdichtung:</label>
            <div className="mt-px flex gap-[3px]">
              <span className="relative flex h-[13px] flex-1">
                <select id="verdichtung" disabled className="w-full appearance-none border border-[#cfcfcf] bg-[#f0f0f0]"><option></option></select>
                <Chevron />
              </span>
              <button disabled aria-label="Neu" className={greyBtn}><Icon name="ordnergrau" className="size-[11px]" /></button>
              <button disabled aria-label="Bearbeiten" className={greyBtn}><Icon name="editgrau" className="size-[11px]" /></button>
            </div>
          </Group>
          <Group title="Geschichtetes Netz" className="h-[157px]">
            <label className="relative flex h-4 items-center gap-[3px]">
              <span className="pointer-events-none absolute -left-[3px] h-4 w-[57px] border-2 border-[#c4161c]" />
              <input type="checkbox" className={box} />Aktivieren
            </label>
            <div className="pl-[60px] leading-[13px]">Nr.</div>
            <div className="flex h-[14px] items-center text-[#a3a3a3]">
              <label htmlFor="fa" className="w-[60px]">Fläche A:</label>
              <span className="relative mr-[2px] flex h-[13px] w-[38px]">
                <select id="fa" disabled className="w-full appearance-none border border-[#cfcfcf] bg-white"><option></option></select>
                <Chevron />
              </span>
              <button disabled aria-label="Auswählen" className={greyBtn}><Icon name="auswahlgrau" className="size-[11px]" /></button>
            </div>
            <div className="mt-[3px] flex h-[14px] items-center text-[#a3a3a3]">
              <label htmlFor="fb" className="w-[60px]">Fläche B:</label>
              <input id="fb" disabled value="0" className="h-[13px] w-7 border border-[#cfcfcf] bg-[#f0f0f0] px-[2px] text-[#7a7a7a]" />
            </div>
            <div className="mt-[11px] flex h-3 items-center text-[#a3a3a3]">Anzahl der FE-Schichten:</div>
            <label className="flex h-[14px] items-center gap-[3px] text-[#6d6d6d]">
              <input type="radio" name="schichten" disabled className="size-2 appearance-none rounded-full border border-[#b9b9b9] bg-white" />Nach FE-Netz-Einstellungen
            </label>
            <div className="flex h-[15px] items-center text-[#6d6d6d]">
              <label className="flex w-[60px] items-center gap-[3px]">
                <input type="radio" name="schichten" disabled defaultChecked className="size-2 appearance-none rounded-full border border-[#b9b9b9] bg-[radial-gradient(circle,#a9a9a9_40%,#fff_45%)]" />Definiert:
              </label>
              <input aria-label="Anzahl" disabled value="2" className="h-[13px] w-[18px] border border-r-0 border-[#cfcfcf] bg-white pr-px text-right" />
              <span className="flex h-[13px] w-[10px] flex-col border border-[#cfcfcf] bg-[#ececec]">
                <button disabled aria-label="Mehr" className="flex flex-1 items-center justify-center"><svg viewBox="0 0 4 3" className="h-[3px] w-1"><path d="M0 3h4l-2-3z" fill="#666" /></svg></button>
                <button disabled aria-label="Weniger" className="flex flex-1 items-center justify-center border-t border-[#cfcfcf]"><svg viewBox="0 0 4 3" className="h-[3px] w-1"><path d="M0 0h4l-2 3z" fill="#666" /></svg></button>
              </span>
            </div>
          </Group>
        </div>
        <div className="flex min-w-0 flex-1 flex-col gap-[5px]">
          <div className="h-[98px] border-t border-l border-[#b9b9b4] bg-linear-to-br from-white to-[#fdf4dc]"><RefineFigure /></div>
          <div className="h-[157px] border-t border-l border-[#b9b9b4] bg-linear-to-tr from-white to-[#fdf4d8]"><LayerFigure /></div>
        </div>
      </div>
      <footer className="flex h-[24px] items-center gap-[6px] pr-1 pl-1">
        {["hilfe", "stift", "einheiten", "auswahl"].map((n) => (
          <button key={n} aria-label={n} className="flex h-[14px] w-4 items-center justify-center border border-[#b4b4b4] bg-[#e3e3e3]"><Icon name={n} className="size-3" /></button>
        ))}
        <button className="ml-auto h-[13px] w-[46px] border-2 border-[#2a7fd4] bg-[#e3e3e3] leading-[9px] text-black">OK</button>
        <button className="h-[13px] w-[46px] border border-[#b4b4b4] bg-[#e3e3e3] text-black">Abbrechen</button>
      </footer>
    </div>
  );
}

const TABS = ["Knoten", "Linien", "Materialien", "Flächen", "Volumenkörper", "Öffnungen", "Knotenlager", "Linienlager", "Flächenlager", "Liniengelenke", "Querschnitte", "Stabendgelenke"];
const th = "border-r border-b border-[#b0b0b0] bg-[#efefef] p-0 font-normal";
const up = "border-r border-[#b0b0b0] bg-[#efefef] p-0 font-normal";
const td = "overflow-hidden border-r border-b border-[#b0b0b0] bg-[#efefef] p-0";

function Grid() {
  return (
    <table className="w-full table-fixed border-separate border-spacing-0 border-t border-[#8a8a8a] text-center leading-[9px] whitespace-nowrap">
      <colgroup>
        <col className="w-[29px]" /><col className="w-[102px]" /><col className="w-[103px]" /><col className="w-[34px]" /><col className="w-[57px]" />
        <col className="w-[65px]" /><col className="w-[57px]" /><col className="w-[49px]" /><col className="w-[50px]" /><col />
      </colgroup>
      <thead>
        <tr className="h-[9px]">
          <th rowSpan={3} className="border-r border-b border-[#9a9a9a] bg-[#e4e4e4] p-0 pt-1 leading-[8px] font-normal">Volumen<br />Nr.</th>
          {"ABCDEFGHI".split("").map((l) => (
            <th key={l} className={`h-[9px] border-r border-b border-[#9a9a9a] p-0 leading-[8px] font-normal ${l === "A" ? "bg-[#0a78d7] text-white" : "bg-[#e4e4e4]"}`}>{l}</th>
          ))}
        </tr>
        <tr className="h-[10px]">
          <th className={up} /><th className={up} /><th className={up}>Material</th><th colSpan={2} className={up}>Gas (Herstellung)</th>
          <th className={up}>Zusammengesetzt</th><th className={`${up} text-[#7d7d7d]`}>Volumen</th><th className={`${up} text-[#7d7d7d]`}>Gewicht</th><th className={up} />
        </tr>
        <tr className="h-[11px]">
          <th className={th}>Volumenkörpertyp</th><th className={th}>Begrenzungsflächen Nr.</th><th className={th}>Nr.</th><th className={th}>Druck P [bar]</th>
          <th className={th}>Temperatur T [°C]</th><th className={th}>Volumenkörper</th><th className={`${th} text-[#7d7d7d]`}>V [m³]</th>
          <th className={`${th} text-[#7d7d7d]`}>G [kg]</th><th className={`${th} overflow-hidden`}>Komment</th>
        </tr>
      </thead>
      <tbody>
        <tr className="h-[10px]">
          <th className="border-r border-b border-[#9a9a9a] bg-[#0a78d7] p-0 font-normal text-white">1</th>
          <td className="border border-[#555] bg-[#ffffc0] p-0 text-left leading-[8px]">
            <span className="flex items-center gap-[2px]"><span className="size-2 border border-[#4a64a8] bg-[#6496ff]" />Material</span>
          </td>
          <td className="border-r border-b border-[#b0b0b0] bg-[#ffffc0] p-0 pl-[2px] text-left">1-3</td>
          <td className="border-r border-b border-[#b0b0b0] bg-[#ffffc0] p-0">
            <span className="flex items-center gap-[10px]"><span className="ml-px size-2 border border-[#666] bg-[#a0a0a0]" />1</span>
          </td>
          <td className={td} /><td className={td} />
          <td className="border-r border-b border-[#b0b0b0] bg-[#ffffc0] p-0">
            <input type="checkbox" aria-label="Zusammengesetzt" className="mx-auto block size-[7px] appearance-none border border-black bg-white shadow-[1px_1px_0_#000]" />
          </td>
          <td className={`${td} pr-[2px] text-right text-[#7d7d7d]`}>3.000</td><td className={`${td} pr-[2px] text-right text-[#7d7d7d]`}>7500.00</td>
          <td className="border-r border-b border-[#b0b0b0] bg-[#ffffc0] p-0" />
        </tr>
        {[2, 3].map((r) => (
          <tr key={r} className="h-[10px]">
            <th className="border-r border-b border-[#9a9a9a] bg-[#e4e4e4] p-0 font-normal">{r}</th>
            <td className="border-r border-b border-[#b0b0b0] bg-white p-0" />
            {[0, 1, 2, 3, 4, 5, 6, 7].map((k) => <td key={k} className={td} />)}
          </tr>
        ))}
      </tbody>
    </table>
  );
}

function Arrow({ d }: { d: string }) {
  return <svg viewBox="0 0 6 6" className="size-[6px]"><path d={d} fill="none" stroke="#333" strokeWidth="1.200" /></svg>;
}

function TablePanel() {
  return (
    <section className="shrink-0 bg-[#f0f0f0] font-['Liberation_Sans',Arial,sans-serif] text-[7px] text-[#161616]">
      <header className="flex h-3 items-center justify-between bg-[#bac1cb] pt-[2px] pr-[2px] pl-1 font-['Open_Sans','Noto_Sans',sans-serif] text-[7px] text-[#3a414c]">
        <h2>1.5 Volumenkörper</h2>
        <PinClose />
      </header>
      <div className="flex h-[18px] items-center bg-linear-to-b from-[#eef2f8] to-[#d3dae6] pl-1">
        <Tools items="*t1 t2 t3 t4 t5 | t6 t7 | *t8 *t9 t10 | t11 t12 t13 | t14 | t15 t16 t17 | t18 t19 | stift | hand brille excel rechner | formel fx fxrot" />
      </div>
      <div className="flex h-[71px] border-t border-[#9aa0a8] pl-px">
        <div className="min-w-0 flex-1"><Grid /></div>
        <div className="flex h-[60px] w-[10px] shrink-0 flex-col items-center justify-between bg-[#f0f0f0] py-px">
          <Arrow d="M1 4l2-2l2 2" /><span className="h-[42px] w-[9px] bg-[#cbcbcb]" /><Arrow d="M1 2l2 2l2-2" />
        </div>
      </div>
      <div className="flex h-[10px] items-center gap-[3px] px-[3px]">
        <Arrow d="M4 1l-2 2l2 2" /><span className="mr-3 h-[10px] flex-1 bg-[#cbcbcb]" /><Arrow d="M2 1l2 2l-2 2" />
      </div>
      <div className="mt-[2px] flex h-[23px] items-start border-t border-[#777] pl-px">
        <div role="tablist" className="flex">
          {TABS.map((t) => (
            <button key={t} role="tab" aria-selected={t === "Volumenkörper"} className={`h-[11px] rounded-b-xs border-r border-b border-[#777] px-[2px] leading-[10px] whitespace-nowrap ${t === "Volumenkörper" ? "bg-white" : "bg-[#f0f0f0]"}`}>{t}</button>
          ))}
        </div>
        <div className="ml-auto flex h-[10px]">
          {["M1.500 1v4M4.500 1l-2 2l2 2z", "M4 1l-2 2l2 2z", "M2 1l2 2l-2 2z", "M1.500 1l2 2l-2 2zM4.500 1v4"].map((d, i) => (
            <button key={i} aria-label="Blättern" className="flex w-[9px] items-center justify-center border border-[#b8b8b8] bg-[#f0f0f0]">
              <svg viewBox="0 0 6 6" className="size-[6px]"><path d={d} fill={i < 2 ? "#aaa" : "#000"} stroke={i < 2 ? "#aaa" : "#000"} /></svg>
            </button>
          ))}
        </div>
      </div>
    </section>
  );
}

export default function App() {
  return (
    <div className="relative flex h-screen min-h-[540px] w-full flex-col overflow-hidden bg-[#cdd4de]">
      <header className="flex h-[19px] items-center border-t border-[#8f8f8f] bg-white pr-[9px] pl-3 font-['Open_Sans','Noto_Sans',sans-serif] text-[7px] text-[#8c8c8c]">
        <svg viewBox="0 0 10 10" className="-ml-2 mr-[3px] size-[10px]">
          <path d="M3 2l4-1.500l3 2v4l-4 3l-3-2z" fill="#3c67a4" stroke="#1e2f50" strokeWidth="0.800" />
          <path d="M3 4.500h-2v2h2v2.500h-3" fill="none" stroke="#dca325" strokeWidth="1.500" />
        </svg>
        <h1 className="flex-1">RFEM 5.24.02 x64 - [00640-model-file*]</h1>
        <div className="flex items-center gap-[22px]">
          <button aria-label="Minimieren"><svg viewBox="0 0 7 7" className="size-[7px]"><path d="M0 3.500h7" stroke="#888" /></svg></button>
          <button aria-label="Maximieren"><svg viewBox="0 0 7 7" className="size-[7px]"><path d="M0.500 0.500h6v6h-6z" fill="none" stroke="#888" /></svg></button>
          <button aria-label="Beenden"><svg viewBox="0 0 7 7" className="size-[7px]"><path d="M0.500 0.500l6 6M6.500 0.500l-6 6" stroke="#888" /></svg></button>
        </div>
      </header>
      <nav className="flex h-[17px] shrink-0 items-center bg-[#cfd4dd] pr-[1px] font-['Open_Sans','Noto_Sans',sans-serif] text-[7px] text-[#3f4550]">
        <span className="ml-[2px] h-3 border-l border-dotted border-[#8a93a5]" />
        <svg viewBox="0 0 10 8" className="mr-[7px] ml-[2px] h-2 w-[10px]"><path d="M0 0h10v8h-10z" fill="#1d3670" /><path d="M0 5h10" stroke="#fff" /><path d="M3 3v3h1v-3zM6 2v4h1v-4z" fill="#fff" /></svg>
        <div className="flex gap-[9px]">
          {MENUS.map(([a, b, d]) => <button key={a + b + d}>{a}<u>{b}</u>{d}</button>)}
        </div>
        <div className="ml-auto flex gap-1">
          <button aria-label="Fenster minimieren"><svg viewBox="0 0 6 6" className="size-[6px]"><path d="M1 5.500h4" stroke="#555" /></svg></button>
          <button aria-label="Fenster wiederherstellen"><svg viewBox="0 0 6 6" className="size-[6px]"><path d="M0.500 2.500h3v3h-3zM2.500 2v-1.500h3v3h-1.500" fill="none" stroke="#555" strokeWidth="0.800" /></svg></button>
          <button aria-label="Fenster schließen"><svg viewBox="0 0 6 6" className="size-[6px]"><path d="M1 1l4 4M5 1l-4 4" stroke="#555" /></svg></button>
        </div>
      </nav>
      <div className="flex h-4 shrink-0 items-center overflow-hidden border-b border-[#c3cad6] bg-linear-to-b from-[#eff3f9] to-[#d6dde8]">
        <span className="mr-[2px] ml-[2px] h-3 border-l border-dotted border-[#8a93a5]" />
        <Tools items="neu oeffnen block blockblau speichern ablage drucken vorschau | undo redo | flaeche lasso zielring hinweis ordner | *navigator *tabelle | lastfall" />
        <span className="relative ml-[2px] flex h-3 w-[137px] shrink-0">
          <select aria-label="Lastfall" className="w-full appearance-none border border-[#b5b9c0] bg-[#efefef]"><option></option></select>
          <svg viewBox="0 0 4 3" className="pointer-events-none absolute top-1 right-[2px] h-[3px] w-1"><path d="M0 0h4l-2 2.500z" fill="#555" /></svg>
        </span>
        <span className="w-[2px] shrink-0" />
        <Tools items="links rechts lupe xwert augex xachse | brille messen messengrau : hand raster *ebene ebene2 ebene3 gitter beschriftung | verbinden ellipse spiegeln kreuz kugel kamera | monitor" />
      </div>
      <div className="flex h-4 shrink-0 items-center overflow-hidden border-b border-[#c3cad6] bg-linear-to-b from-[#eff3f9] to-[#d6dde8]">
        <span className="mr-[2px] ml-[2px] h-3 border-l border-dotted border-[#8a93a5]" />
        <Tools items="punkt > stab stab2 > linie > | auflager gelenk volumen | mass > text rahmen | kreis > quadrat > balken > koerper koerperneu > | fluss > last1 last2 last3 last4 last5 > : greifen zoom zoomx drahtwuerfel wuerfelgruppe | achsex achsey achsez achsey2 > zeichnen > | netzkugel > : verlauf fisch | ergx regenbogen ergwuerfel ergpfeile ergpfad erglicht > ergx kacheln" />
      </div>
      <main className="flex min-h-0 flex-1">
        <Navigator />
        <div className="ml-[3px] flex min-w-0 flex-1 flex-col border-l border-[#7f858e]">
          <div className="flex min-h-0 flex-1 items-start justify-end overflow-hidden border-t border-[#7f858e] bg-white pt-px"><ModelView /></div>
          <TablePanel />
        </div>
      </main>
      <footer className="flex h-[14px] shrink-0 items-center gap-[2px] border-t border-[#dfe3e8] bg-linear-to-b from-[#aab0ba] to-[#c2c7cf] pl-[265px] font-['Liberation_Sans',Arial,sans-serif] text-[7px] leading-[9px] text-[#16181c]">
        {["FANG", "RASTER", "KARTES", "OFANG", "HLINIEN", "DXF"].map((t) => (
          <button key={t} className={`h-[11px] px-px ${t === "RASTER" ? "border border-t-[#e4e7eb] border-r-[#70757e] border-b-[#70757e] border-l-[#e4e7eb]" : "border border-t-[#50555e] border-r-[#dfe3e8] border-b-[#dfe3e8] border-l-[#50555e]"}`}>{t}</button>
        ))}
      </footer>
      <Dialog />
    </div>
  );
}
